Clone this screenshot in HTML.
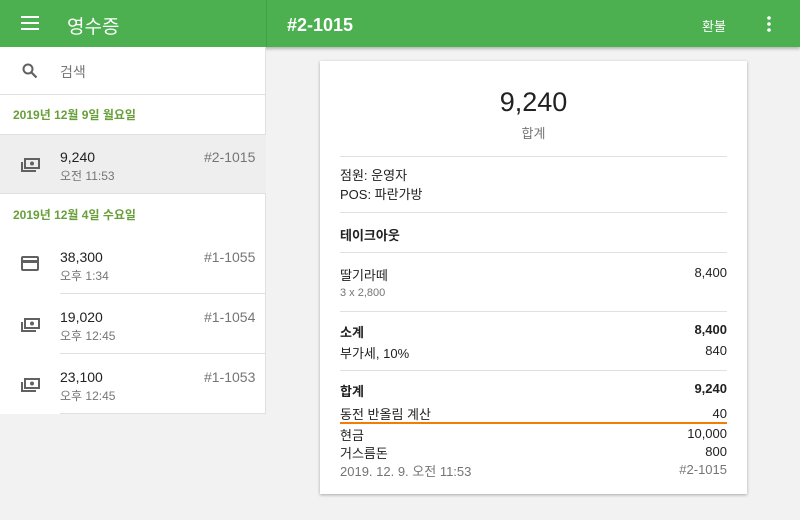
<!DOCTYPE html>
<html><head><meta charset="utf-8"><style>
*{margin:0;padding:0;box-sizing:border-box}
body{width:800px;height:520px;overflow:hidden;background:#f2f2f2;font-family:"Liberation Sans","Noto Sans CJK KR",sans-serif;position:relative;color:#212121}
.a{position:absolute;white-space:nowrap}
.hdr{position:absolute;left:0;top:0;width:800px;height:47px;background:#4caf50;box-shadow:0 2px 3px rgba(0,0,0,.25)}
.left{position:absolute;left:0;top:47px;width:266px;height:367px;background:#fff;border-right:1px solid #e0e0e0}
.card{position:absolute;left:320px;top:61px;width:427px;height:433px;background:#fff;box-shadow:0 1px 3px rgba(0,0,0,.3)}
.hl{position:absolute;height:1px;background:#e0e0e0}
.r{right:20px;text-align:right}
</style></head><body>
<div class="hdr"></div>
<div class="a" style="left:266px;top:0;width:1px;height:47px;background:#43a047"></div>
<svg class="a" style="left:21px;top:16px" width="18" height="14"><rect y="0" width="18" height="2" fill="#fff"/><rect y="6" width="18" height="2" fill="#fff"/><rect y="12" width="18" height="2" fill="#fff"/></svg>
<div class="a" style="left:67px;top:12px;font-size:19px;color:#fff">영수증</div>
<div class="a" style="left:287px;top:15px;font-size:18px;color:#fff;font-weight:bold">#2-1015</div>
<div class="a" style="left:702px;top:16px;font-size:13px;color:#fff">환불</div>
<svg class="a" style="left:766px;top:16px" width="6" height="16"><circle cx="3" cy="2" r="1.8" fill="#fff"/><circle cx="3" cy="8" r="1.8" fill="#fff"/><circle cx="3" cy="14" r="1.8" fill="#fff"/></svg>

<div class="left">
<svg class="a" style="left:22px;top:16px" width="16" height="16"><circle cx="6" cy="6" r="4.5" fill="none" stroke="#616161" stroke-width="2"/><path d="M9.5 9.5L14.5 14.5" stroke="#616161" stroke-width="2.2"/></svg>
<div class="a" style="left:60px;top:15px;font-size:14px;color:#757575">검색</div>
<div class="hl" style="left:0;top:47px;width:266px"></div>
<div class="a" style="left:13px;top:59px;font-size:12px;color:#689f38;font-weight:bold">2019년 12월 9일 월요일</div>
<div class="a" style="left:0;top:87px;width:266px;height:60px;background:#eeeeee;border-top:1px solid #e0e0e0;border-bottom:1px solid #e0e0e0"></div>
<div class="a" style="left:13px;top:159px;font-size:12px;color:#689f38;font-weight:bold">2019년 12월 4일 수요일</div>
<div class="hl" style="left:60px;top:246px;width:206px"></div>
<div class="hl" style="left:60px;top:306px;width:206px"></div>
<div class="hl" style="left:60px;top:366px;width:206px"></div>
</div>
<svg class="a" style="left:21px;top:158px" width="19" height="15"><rect x="4" y="1" width="14" height="9" fill="none" stroke="#616161" stroke-width="2"/><circle cx="11" cy="5.5" r="2" fill="#616161"/><path d="M1 4V13H15" fill="none" stroke="#616161" stroke-width="2"/></svg>
<svg class="a" style="left:21px;top:256px" width="18" height="15"><rect x="1" y="1" width="16" height="13" rx="1" fill="none" stroke="#616161" stroke-width="2"/><rect x="1" y="4" width="16" height="3" fill="#616161"/></svg>
<svg class="a" style="left:21px;top:318px" width="19" height="15"><rect x="4" y="1" width="14" height="9" fill="none" stroke="#616161" stroke-width="2"/><circle cx="11" cy="5.5" r="2" fill="#616161"/><path d="M1 4V13H15" fill="none" stroke="#616161" stroke-width="2"/></svg>
<svg class="a" style="left:21px;top:378px" width="19" height="15"><rect x="4" y="1" width="14" height="9" fill="none" stroke="#616161" stroke-width="2"/><circle cx="11" cy="5.5" r="2" fill="#616161"/><path d="M1 4V13H15" fill="none" stroke="#616161" stroke-width="2"/></svg>

<div class="a" style="left:60px;top:149px;font-size:14px">9,240</div>
<div class="a" style="left:60px;top:167px;font-size:12px;color:#757575">오전 11:53</div>
<div class="a" style="left:204px;top:149px;font-size:14px;color:#757575">#2-1015</div>
<div class="a" style="left:60px;top:249px;font-size:14px">38,300</div>
<div class="a" style="left:60px;top:267px;font-size:12px;color:#757575">오후 1:34</div>
<div class="a" style="left:204px;top:249px;font-size:14px;color:#757575">#1-1055</div>
<div class="a" style="left:60px;top:309px;font-size:14px">19,020</div>
<div class="a" style="left:60px;top:327px;font-size:12px;color:#757575">오후 12:45</div>
<div class="a" style="left:204px;top:309px;font-size:14px;color:#757575">#1-1054</div>
<div class="a" style="left:60px;top:369px;font-size:14px">23,100</div>
<div class="a" style="left:60px;top:387px;font-size:12px;color:#757575">오후 12:45</div>
<div class="a" style="left:204px;top:369px;font-size:14px;color:#757575">#1-1053</div>

<div class="card">
<div class="a" style="left:0;width:427px;text-align:center;top:26px;font-size:27px">9,240</div>
<div class="a" style="left:0;width:427px;text-align:center;top:62px;font-size:13px;color:#757575">합계</div>
<div class="hl" style="left:20px;width:387px;top:95px"></div>
<div class="a" style="left:20px;top:104px;font-size:13px">점원: 운영자</div>
<div class="a" style="left:20px;top:123px;font-size:13px">POS: 파란가방</div>
<div class="hl" style="left:20px;width:387px;top:151px"></div>
<div class="a" style="left:20px;top:164px;font-size:13px;font-weight:bold">테이크아웃</div>
<div class="hl" style="left:20px;width:387px;top:191px"></div>
<div class="a" style="left:20px;top:204px;font-size:13px">딸기라떼</div>
<div class="a r" style="top:204px;font-size:13px">8,400</div>
<div class="a" style="left:20px;top:226px;font-size:11px;color:#757575">3 x 2,800</div>
<div class="hl" style="left:20px;width:387px;top:250px"></div>
<div class="a" style="left:20px;top:261px;font-size:13px;font-weight:bold">소계</div>
<div class="a r" style="top:261px;font-size:13px;font-weight:bold">8,400</div>
<div class="a" style="left:20px;top:282px;font-size:13px">부가세, 10%</div>
<div class="a r" style="top:282px;font-size:13px">840</div>
<div class="hl" style="left:20px;width:387px;top:309px"></div>
<div class="a" style="left:20px;top:320px;font-size:13px;font-weight:bold">합계</div>
<div class="a r" style="top:320px;font-size:13px;font-weight:bold">9,240</div>
<div class="a" style="left:20px;top:343px;font-size:13px">동전 반올림 계산</div>
<div class="a r" style="top:345px;font-size:13px">40</div>
<div class="a" style="left:20px;top:361px;width:387px;height:2px;background:#f57c00"></div>
<div class="a" style="left:20px;top:364px;font-size:13px">현금</div>
<div class="a r" style="top:365px;font-size:13px">10,000</div>
<div class="a" style="left:20px;top:382px;font-size:13px">거스름돈</div>
<div class="a r" style="top:383px;font-size:13px">800</div>
<div class="a" style="left:20px;top:400px;font-size:13px;color:#757575">2019. 12. 9. 오전 11:53</div>
<div class="a r" style="top:401px;font-size:13px;color:#757575">#2-1015</div>
</div>
</body></html>
